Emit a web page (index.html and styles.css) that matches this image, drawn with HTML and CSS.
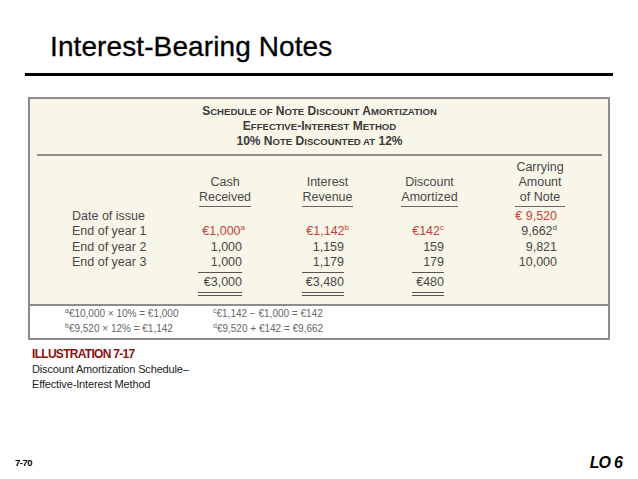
FILE: index.html
```html
<!DOCTYPE html>
<html lang="en">
<head>
<meta charset="utf-8">
<title>Interest-Bearing Notes</title>
<link rel="stylesheet" href="styles.css">
</head>
<body>
<div class="slide">
  <h1 class="title">Interest-Bearing Notes</h1>
  <div class="title-rule"></div>

  <div class="exhibit">
    <div class="panel">
      <div class="caption">
        <div>S<small>CHEDULE OF</small> N<small>OTE</small> D<small>ISCOUNT</small> A<small>MORTIZATION</small></div>
        <div>E<small>FFECTIVE</small>-I<small>NTEREST</small> M<small>ETHOD</small></div>
        <div>10% N<small>OTE</small> D<small>ISCOUNTED AT</small> 12%</div>
      </div>
      <div class="caption-rule"></div>

      <div class="schedule">
        <div class="col col-label">
          <div class="head"></div>
          <div class="vals labels">
            <div class="v">Date of issue</div>
            <div class="v">End of year 1</div>
            <div class="v">End of year 2</div>
            <div class="v">End of year 3</div>
          </div>
        </div>

        <div class="col col-cash">
          <div class="head">
            <span>Cash</span>
            <span class="ul">Received</span>
          </div>
          <div class="vals">
            <div class="v">&nbsp;</div>
            <div class="v red">€1,000<sup class="hang-s">a</sup></div>
            <div class="v">1,000</div>
            <div class="v rule">1,000</div>
            <div class="v total">€3,000</div>
          </div>
        </div>

        <div class="col col-int">
          <div class="head">
            <span>Interest</span>
            <span class="ul">Revenue</span>
          </div>
          <div class="vals">
            <div class="v">&nbsp;</div>
            <div class="v red">€1,142<sup class="hang">b</sup></div>
            <div class="v">1,159</div>
            <div class="v rule">1,179</div>
            <div class="v total">€3,480</div>
          </div>
        </div>

        <div class="col col-disc">
          <div class="head">
            <span>Discount</span>
            <span class="ul">Amortized</span>
          </div>
          <div class="vals">
            <div class="v">&nbsp;</div>
            <div class="v red">€142<sup>c</sup></div>
            <div class="v">159</div>
            <div class="v rule">179</div>
            <div class="v total">€480</div>
          </div>
        </div>

        <div class="col col-carry">
          <div class="head">
            <span>Carrying</span>
            <span>Amount</span>
            <span class="ul ul-wide">of Note</span>
          </div>
          <div class="vals">
            <div class="v red">€ 9,520</div>
            <div class="v">9,662<sup>d</sup></div>
            <div class="v">9,821</div>
            <div class="v">10,000</div>
          </div>
        </div>
      </div>
    </div>

    <div class="notes">
      <div class="note-col">
        <div><sup>a</sup>€10,000 × 10% = €1,000</div>
        <div><sup>b</sup>€9,520 × 12% = €1,142</div>
      </div>
      <div class="note-col">
        <div><sup>c</sup>€1,142 − €1,000 = €142</div>
        <div><sup>d</sup>€9,520 + €142 = €9,662</div>
      </div>
    </div>
  </div>

  <div class="illustration">
    <div class="ill-title">ILLUSTRATION 7-17</div>
    <div class="ill-desc">Discount Amortization Schedule–</div>
    <div class="ill-desc">Effective-Interest Method</div>
  </div>

  <div class="footer">
    <span class="page">7-70</span>
    <span class="lo">LO 6</span>
  </div>
</div>
</body>
</html>
```

FILE: styles.css
```css
html, body {
  margin: 0;
  padding: 0;
  background: #ffffff;
}

body {
  font-family: "Liberation Sans", Arial, Helvetica, sans-serif;
  color: #000;
}

.slide {
  width: 638px;
  height: 479px;
  overflow: hidden;
}

.title {
  margin: 0;
  padding: 31px 0 0 50px;
  font-size: 28px;
  font-weight: normal;
  line-height: 32px;
  letter-spacing: 0.1px;
  color: #000;
  -webkit-text-stroke: 0.3px #000;
}

.title-rule {
  margin: 10px 0 0 25px;
  width: 588px;
  height: 3px;
  background: #000;
}

.exhibit {
  margin: 21px 0 0 28px;
  width: 582px;
  box-sizing: border-box;
  border: 2px solid #8c8c8c;
}

.panel {
  background: #f8f6e8;
  padding: 5px 6px 8px 7px;
}

.caption {
  text-align: center;
  font-weight: bold;
  font-size: 12px;
  line-height: 15px;
  color: #3a3a3a;
}

.caption small {
  font-size: 9.6px;
}

.caption-rule {
  margin-top: 5px;
  height: 2px;
  background: #8f8f8f;
}

.schedule {
  display: flex;
  margin-top: 4px;
  padding-left: 35px;
}

.col {
  display: flex;
  flex-direction: column;
}

.col-label { width: 102px; }
.col-cash { width: 102px; }
.col-int { width: 103px; }
.col-disc { width: 101px; }
.col-carry { width: 120px; }

.head {
  height: 47px;
  display: flex;
  flex-direction: column;
  justify-content: flex-end;
  align-items: center;
  font-size: 12.5px;
  line-height: 15px;
  color: #484848;
}

.head .ul {
  padding-bottom: 1px;
  border-bottom: 1px solid #666;
}

.head .ul-wide {
  padding: 0 5px 1px;
}

.vals {
  margin-top: 2px;
  align-self: flex-end;
  font-size: 12.5px;
  line-height: 15.3px;
  color: #484848;
  text-align: right;
}

.vals.labels {
  align-self: flex-start;
  text-align: left;
}

.col-cash .vals { margin-right: 34px; min-width: 44px; }
.col-int .vals { margin-right: 35px; min-width: 42px; }
.col-disc .vals { margin-right: 36px; }
.col-carry .vals { margin-right: 43px; }

.v {
  height: 15.3px;
  white-space: nowrap;
}

.v.rule {
  padding-bottom: 2px;
  border-bottom: 1px solid #555;
}

.v.total {
  padding-top: 2px;
  padding-bottom: 2px;
  border-bottom: 4px double #555;
}

.red {
  color: #c8413f;
}

sup {
  font-size: 8px;
  line-height: 0;
  vertical-align: 5px;
}

.hang { margin-right: -5px; }
.hang-s { margin-right: -3px; }

.notes {
  display: flex;
  background: #ffffff;
  border-top: 2px solid #8c8c8c;
  padding: 0 0 2px 35px;
  font-size: 10px;
  line-height: 15px;
  color: #666;
}

.notes sup {
  font-size: 7px;
  vertical-align: 4px;
}

.note-col:first-child {
  width: 148px;
}

.illustration {
  margin-top: 6.5px;
  padding-left: 32px;
  line-height: 15px;
}

.ill-title {
  font-size: 12px;
  font-weight: bold;
  letter-spacing: -0.7px;
  color: #8b1010;
}

.ill-desc {
  font-size: 11px;
  letter-spacing: -0.15px;
  color: #222;
}

.footer {
  display: flex;
  justify-content: space-between;
  align-items: center;
  height: 20px;
  margin-top: 61px;
  padding: 0 16px 0 15px;
}

.page {
  font-size: 9.5px;
  font-weight: bold;
  letter-spacing: -0.5px;
}

.lo {
  font-size: 16px;
  font-weight: bold;
  font-style: italic;
  letter-spacing: -0.8px;
}
```
